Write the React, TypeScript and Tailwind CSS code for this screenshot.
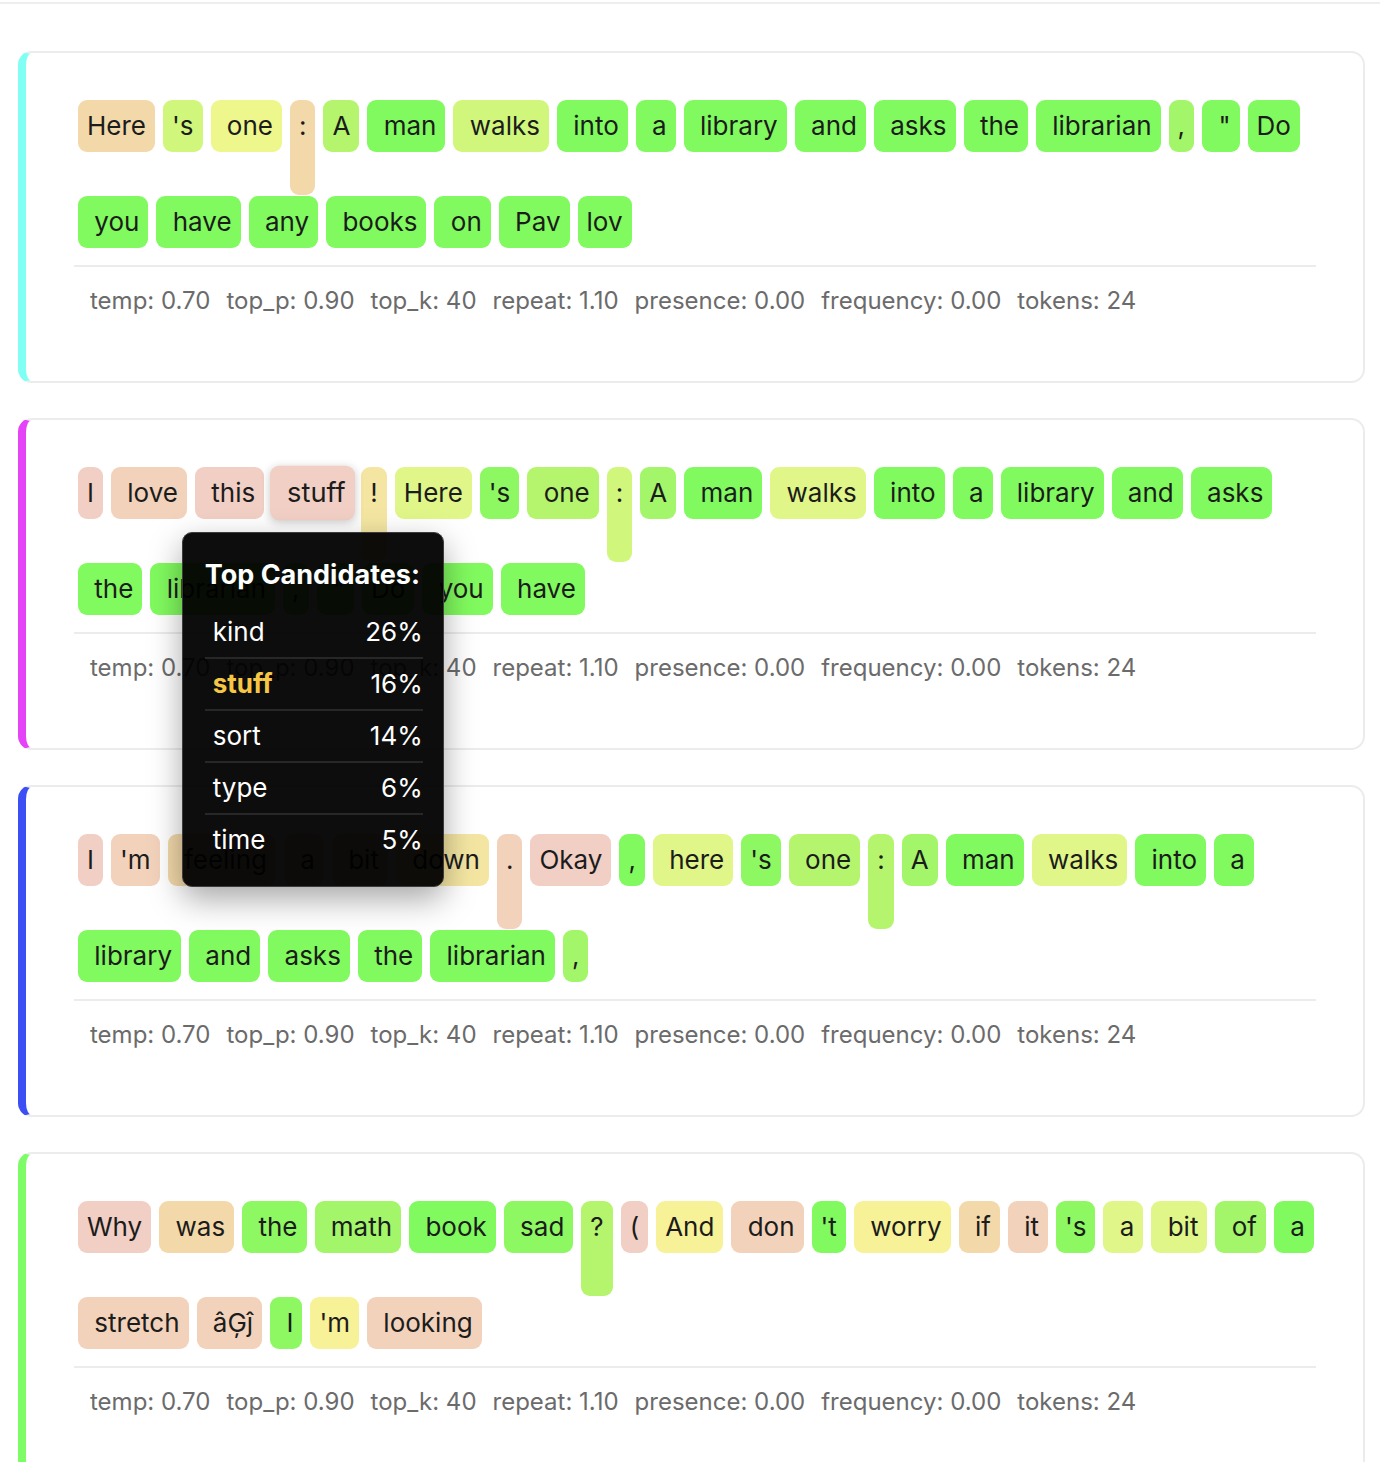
import React from "react";

// token background classes, from low probability (pink) to high (green)
const C = {
	pink: "bg-[#f1cfc4]",
	peach: "bg-[#f2d2bb]",
	tan: "bg-[#f3d9aa]",
	pale: "bg-[#f4e6a2]",
	yellow: "bg-[#f7f197]",
	lime: "bg-[#eef78c]",
	yg: "bg-[#e0f688]",
	yg2: "bg-[#d0f77c]",
	lg: "bg-[#b5f56e]",
	lg2: "bg-[#a3f66a]",
	g2: "bg-[#8ef862]",
	g: "bg-[#80fa5e]",
};

interface Tok {
	t: string;
	c: string;
	tall?: boolean;
	hover?: boolean;
}

interface Sample {
	accent: string;
	lines: Tok[][];
}

const tk = (t: string, c: string, tall = false): Tok => ({ t, c, tall });

const samples: Sample[] = [
	{
		accent: "border-l-[#80fff4]",
		lines: [
			[
				tk("Here", C.tan),
				tk("'s", C.yg2),
				tk(" one", C.lime),
				tk(":", C.tan, true),
				tk("A", C.lg),
				tk(" man", C.g),
				tk(" walks", C.yg2),
				tk(" into", C.g),
				tk(" a", C.g),
				tk(" library", C.g),
				tk(" and", C.g),
				tk(" asks", C.g),
				tk(" the", C.g),
				tk(" librarian", C.g),
				tk(",", C.lg2),
				tk(' "', C.g),
				tk("Do", C.g),
			],
			[
				tk(" you", C.g),
				tk(" have", C.g),
				tk(" any", C.g),
				tk(" books", C.g),
				tk(" on", C.g),
				tk(" Pav", C.g),
				tk("lov", C.g),
			],
		],
	},
	{
		accent: "border-l-[#e443f7]",
		lines: [
			[
				tk("I", C.pink),
				tk(" love", C.peach),
				tk(" this", C.pink),
				{ t: " stuff", c: C.pink, hover: true },
				tk("!", C.pale, true),
				tk("Here", C.yg),
				tk("'s", C.g2),
				tk(" one", C.lg),
				tk(":", C.yg2, true),
				tk("A", C.lg2),
				tk(" man", C.g),
				tk(" walks", C.yg),
				tk(" into", C.g),
				tk(" a", C.g),
				tk(" library", C.g),
				tk(" and", C.g),
				tk(" asks", C.g),
			],
			[
				tk(" the", C.g),
				tk(" librarian", C.g),
				tk(",", C.g2),
				tk(' "', C.g),
				tk("Do", C.g),
				tk(" you", C.g),
				tk(" have", C.g),
			],
		],
	},
	{
		accent: "border-l-[#3b4ff5]",
		lines: [
			[
				tk("I", C.pink),
				tk("'m", C.peach),
				tk(" feeling", C.tan),
				tk(" a", C.peach),
				tk(" bit", C.tan),
				tk(" down", C.pale),
				tk(".", C.peach, true),
				tk("Okay", C.pink),
				tk(",", C.g),
				tk(" here", C.yg),
				tk("'s", C.g2),
				tk(" one", C.lg),
				tk(":", C.lg, true),
				tk("A", C.lg2),
				tk(" man", C.g),
				tk(" walks", C.yg),
				tk(" into", C.g),
				tk(" a", C.g),
			],
			[
				tk(" library", C.g),
				tk(" and", C.g),
				tk(" asks", C.g),
				tk(" the", C.g),
				tk(" librarian", C.g),
				tk(",", C.lg2),
			],
		],
	},
	{
		accent: "border-l-[#7dfc68]",
		lines: [
			[
				tk("Why", C.pink),
				tk(" was", C.tan),
				tk(" the", C.g2),
				tk(" math", C.lg2),
				tk(" book", C.g),
				tk(" sad", C.g2),
				tk("?", C.lg, true),
				tk("(", C.pink),
				tk("And", C.yellow),
				tk(" don", C.peach),
				tk("'t", C.g),
				tk(" worry", C.yellow),
				tk(" if", C.tan),
				tk(" it", C.peach),
				tk("'s", C.g2),
				tk(" a", C.yg),
				tk(" bit", C.yg),
				tk(" of", C.lg2),
				tk(" a", C.g),
			],
			[
				tk(" stretch", C.peach),
				tk(" âĢĵ", C.peach),
				tk(" I", C.g2),
				tk("'m", C.yellow),
				tk(" looking", C.peach),
			],
		],
	},
];

const params = [
	"temp: 0.70",
	"top_p: 0.90",
	"top_k: 40",
	"repeat: 1.10",
	"presence: 0.00",
	"frequency: 0.00",
	"tokens: 24",
];

const candidates = [
	{ word: "kind", p: "26%" },
	{ word: "stuff", p: "16%", picked: true },
	{ word: "sort", p: "14%" },
	{ word: "type", p: "6%" },
	{ word: "time", p: "5%" },
];

function Tooltip() {
	return (
		<div className="absolute left-1/2 top-[calc(100%+13px)] z-50 w-[262px] -translate-x-1/2 rounded-[10px] border border-[#3c3c3c] bg-black/95 pl-[22px] pr-[20px] pt-[22px] pb-[21px] text-white shadow-[0_12px_32px_rgba(0,0,0,0.35)]">
			<div className="mb-[12px] text-[27px] font-bold leading-[40px] whitespace-nowrap">
				Top Candidates:
			</div>
			{candidates.map((c, i) => (
				<div
					key={c.word}
					className={`flex justify-between pl-[8px] py-[11px] text-[26px] leading-[28px] ${
						i < candidates.length - 1 ? "border-b-2 border-[#272727]" : ""
					}`}
				>
					<span className={c.picked ? "font-bold text-[#f6c744]" : ""}>{c.word}</span>
					<span>{c.p}</span>
				</div>
			))}
		</div>
	);
}

function Token({ tok }: { tok: Tok }) {
	const box = `block rounded-[9px] px-[9px] text-[26px] leading-[52px] whitespace-pre text-[#1c1c1c] ${tok.c} ${
		tok.tall ? "h-[95px] -mb-[43px]" : "h-[52px]"
	}`;

	if (tok.hover) {
		return (
			<div className="relative">
				<span className={`${box} scale-[1.05] shadow-[0_2px_8px_rgba(0,0,0,0.18)]`}>{tok.t}</span>
				<Tooltip />
			</div>
		);
	}
	return <span className={box}>{tok.t}</span>;
}

function SampleCard({ sample }: { sample: Sample }) {
	return (
		<div
			className={`rounded-[14px] border-2 border-[#ececec] border-l-[8px] ${sample.accent} bg-white pl-[48px] pr-[47px] pt-[47px] pb-[64px]`}
		>
			<div className="flex flex-col gap-[44px] pl-[4px]">
				{sample.lines.map((line, i) => (
					<div key={i} className="flex items-start gap-x-[8px]">
						{line.map((tok, j) => (
							<Token key={j} tok={tok} />
						))}
					</div>
				))}
			</div>
			<div className="mt-[17px] border-t-2 border-[#ececec] pt-[18px] pl-[16px]">
				<div className="flex gap-x-[16px] text-[24px] leading-[32px] text-[#6b6b6b] whitespace-nowrap">
					{params.map((p) => (
						<span key={p}>{p}</span>
					))}
				</div>
			</div>
		</div>
	);
}

export default function App() {
	return (
		<div className="min-h-screen bg-white font-['Inter','Noto_Sans',sans-serif]">
			<div className="mt-[2px] h-[2px] bg-[#eeeeee]" />
			<div className="flex flex-col gap-[35px] pt-[47px] pb-[40px] pl-[18px] pr-[15px]">
				{samples.map((s, i) => (
					<SampleCard key={i} sample={s} />
				))}
			</div>
		</div>
	);
}
